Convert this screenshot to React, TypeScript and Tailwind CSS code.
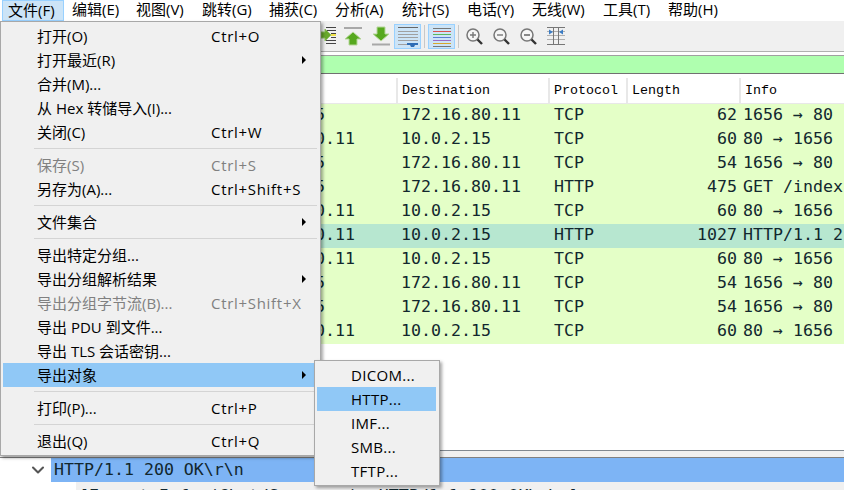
import React from 'react';
import { ChevronDown } from 'lucide-react';

const menuBar = [
  { label: '文件(F)', cls: 'w-[62px] pl-[5px] bg-[#cce4f7] border border-[#99d1ff]' },
  { label: '编辑(E)', cls: 'w-[64px] pl-[8px]' },
  { label: '视图(V)', cls: 'w-[66px] pl-[8px]' },
  { label: '跳转(G)', cls: 'w-[67px] pl-[8px]' },
  { label: '捕获(C)', cls: 'w-[66px] pl-[8px]' },
  { label: '分析(A)', cls: 'w-[67px] pl-[8px]' },
  { label: '统计(S)', cls: 'w-[65px] pl-[8px]' },
  { label: '电话(Y)', cls: 'w-[65px] pl-[8px]' },
  { label: '无线(W)', cls: 'w-[71px] pl-[8px]' },
  { label: '工具(T)', cls: 'w-[65px] pl-[8px]' },
  { label: '帮助(H)', cls: 'w-[70px] pl-[8px]' },
];

// the source column is almost entirely behind the open menu, only its tail shows
const rows = [
  ['5', '172.16.80.11', 'TCP', '62', '1656 → 80'],
  ['0.11', '10.0.2.15', 'TCP', '60', '80 → 1656'],
  ['5', '172.16.80.11', 'TCP', '54', '1656 → 80'],
  ['5', '172.16.80.11', 'HTTP', '475', 'GET /index'],
  ['0.11', '10.0.2.15', 'TCP', '60', '80 → 1656'],
  ['0.11', '10.0.2.15', 'HTTP', '1027', 'HTTP/1.1 2'],
  ['0.11', '10.0.2.15', 'TCP', '60', '80 → 1656'],
  ['5', '172.16.80.11', 'TCP', '54', '1656 → 80'],
  ['5', '172.16.80.11', 'TCP', '54', '1656 → 80'],
  ['0.11', '10.0.2.15', 'TCP', '60', '80 → 1656'],
];

type Item = { label?: string; keys?: string; off?: boolean; sub?: boolean; on?: boolean };

const fileMenu: Item[] = [
  { label: '打开(O)', keys: 'Ctrl+O' },
  { label: '打开最近(R)', sub: true },
  { label: '合并(M)...' },
  { label: '从 Hex 转储导入(I)...' },
  { label: '关闭(C)', keys: 'Ctrl+W' },
  {},
  { label: '保存(S)', keys: 'Ctrl+S', off: true },
  { label: '另存为(A)...', keys: 'Ctrl+Shift+S' },
  {},
  { label: '文件集合', sub: true },
  {},
  { label: '导出特定分组...' },
  { label: '导出分组解析结果', sub: true },
  { label: '导出分组字节流(B)...', keys: 'Ctrl+Shift+X', off: true },
  { label: '导出 PDU 到文件...' },
  { label: '导出 TLS 会话密钥...' },
  { label: '导出对象', sub: true, on: true },
  {},
  { label: '打印(P)...', keys: 'Ctrl+P' },
  {},
  { label: '退出(Q)', keys: 'Ctrl+Q' },
];

const ui = "font-['Open_Sans','Noto_Sans_CJK_SC',sans-serif]";
const mono = "font-['DejaVu_Sans_Mono',monospace]";

function Toolbar() {
  return (
    <div className="h-[30px] bg-[#f0f0f0] flex items-center pl-[316px] shrink-0">
      {/* go to packet */}
      <svg width="24" height="24" viewBox="0 0 24 24">
        <path d="M10 3.5h10M10 6.5h10M15 9.5h5M15 13.5h5M10 16.5h10M10 19.5h10" stroke="#444" fill="none" />
        <path d="M5 8h4V5l6 6-6 6v-3H5z" fill="#68a82c" stroke="#8fc062" />
        <path d="M15 10h5v2h-5z" fill="#f2e34c" />
      </svg>
      {/* first packet */}
      <svg width="24" height="24" viewBox="0 0 24 24" className="ml-[1px]">
        <path d="M3 4h18" stroke="#a8a8a8" strokeWidth="2" />
        <path d="M12 8l8 7h-4v6H8v-6H4z" fill="#56a81e" stroke="#b6d79a" />
      </svg>
      {/* last packet */}
      <svg width="24" height="24" viewBox="0 0 24 24" className="ml-[3px]">
        <path d="M4 20.5h18" stroke="#a8a8a8" strokeWidth="2" />
        <path d="M13 17l8-7h-4V3H9v7H5z" fill="#56a81e" stroke="#b6d79a" />
      </svg>
      {/* auto scroll */}
      <div className="w-[27px] h-[25px] ml-[2px] bg-[#cce4f7] border border-[#99d1ff] flex items-center justify-center">
        <svg width="23" height="23" viewBox="0 0 23 23">
          <path d="M2 2.5h20" stroke="#666" />
          <path d="M2 6.5h20M2 9.5h20M2 12.5h20M2 15.5h20" stroke="#a0a0a0" />
          <path d="M2 19.5h10" stroke="#a0a0a0" />
          <path d="M11 18h11v2h-3l-1 2h-3l-1-2h-3z" fill="#2f6db5" />
        </svg>
      </div>
      <div className="w-px h-[23px] bg-[#c8c8c8] ml-[3px]" />
      {/* colorize */}
      <div className="w-[27px] h-[25px] ml-[3px] bg-[#cce4f7] border border-[#99d1ff] flex items-center justify-center">
        <svg width="20" height="21" viewBox="0 0 20 21" fill="none" strokeWidth="1">
          <path d="M1 2.5h18" stroke="#777" />
          <path d="M1 5.5h18" stroke="#d9534f" />
          <path d="M1 8.5h18" stroke="#5cb85c" />
          <path d="M1 11.5h18" stroke="#5b7fd1" />
          <path d="M1 14.5h18" stroke="#9a6fc4" />
          <path d="M1 17.5h18" stroke="#d8a72c" />
          <path d="M1 20.5h18" stroke="#777" />
        </svg>
      </div>
      <div className="w-px h-[23px] bg-[#c8c8c8] ml-[3px]" />
      {/* zoom in, zoom out, normal size */}
      <svg width="20" height="20" viewBox="0 0 20 20" fill="none" className="ml-[4px]">
        <circle cx="10" cy="9" r="6" fill="#f6f6f6" stroke="#777" strokeWidth="1.5" />
        <path d="M7 9h6M10 6v6" stroke="#777" strokeWidth="1.4" />
        <path d="M14.5 13.5l4.5 4.5" stroke="#333" strokeWidth="2.4" />
      </svg>
      <svg width="20" height="20" viewBox="0 0 20 20" fill="none" className="ml-[7px]">
        <circle cx="10" cy="9" r="6" fill="#f6f6f6" stroke="#777" strokeWidth="1.5" />
        <path d="M7 9h6" stroke="#777" strokeWidth="1.4" />
        <path d="M14.5 13.5l4.5 4.5" stroke="#333" strokeWidth="2.4" />
      </svg>
      <svg width="20" height="20" viewBox="0 0 20 20" fill="none" className="ml-[7px]">
        <circle cx="10" cy="9" r="6" fill="#f6f6f6" stroke="#777" strokeWidth="1.5" />
        <path d="M7 8h6v2H7z" fill="#888" />
        <path d="M14.5 13.5l4.5 4.5" stroke="#333" strokeWidth="2.4" />
      </svg>
      {/* resize columns */}
      <svg width="20" height="20" viewBox="0 0 20 20" className="ml-[9px]">
        <path d="M1 1.5h18M1 18.5h18" stroke="#777" />
        <path d="M1 5.5h18M1 9.5h18M1 13.5h18" stroke="#b0b0b0" />
        <path d="M7.5 1v18M12.5 1v18" stroke="#777" />
        <path d="M7 6L3 3.5v5zM13 6l4-2.5v5z" fill="#3b7cc4" />
      </svg>
    </div>
  );
}

export default function App() {
  return (
    <div className={`${ui} relative w-[844px] h-[490px] overflow-hidden bg-white text-[15px] text-black`}>
      {/* menu bar */}
      <div className="h-[21px] flex pl-[2px] bg-white">
        {menuBar.map((m) => (
          <div key={m.label} className={`h-[21px] leading-[18px] whitespace-nowrap ${m.cls}`}>{m.label}</div>
        ))}
      </div>

      <Toolbar />
      <div className="h-[1px] bg-[#b0b0b0]" />

      {/* display filter */}
      <div className="h-[26px] bg-white pt-[3px]">
        <div className="w-full h-[19px] bg-[#afffaf] border-t border-t-[#a0a0a0] border-b border-b-[#707070]" />
      </div>

      {/* packet list */}
      <div className="h-[26px] flex items-center font-['Liberation_Mono',monospace] text-[13.33px] border-b border-[#e8e8e8]">
        <div className="w-[398px] h-full border-r-2 border-[#e8e8e8]" />
        <div className="w-[152px] h-full pl-[4px] leading-[25px] border-r-2 border-[#e8e8e8]">Destination</div>
        <div className="w-[78px] h-full pl-[4px] leading-[25px] border-r-2 border-[#e8e8e8]">Protocol</div>
        <div className="w-[113px] h-full pl-[4px] leading-[25px] border-r-2 border-[#e8e8e8]">Length</div>
        <div className="flex-1 pl-[4px] leading-[25px]">Info</div>
      </div>
      <div className={`${mono} text-[16.6px] text-[#12272e]`}>
        {rows.map((r, i) => (
          <div key={i} className={`h-[24px] flex leading-[22px] whitespace-pre ${i === 5 ? 'bg-[#b7e7d0]' : 'bg-[#e4ffc7]'}`}>
            <div className="w-[398px] pl-[315px]">{r[0]}</div>
            <div className="w-[152px] pl-[3px]">{r[1]}</div>
            <div className="w-[78px] pl-[4px]">{r[2]}</div>
            <div className="w-[109px] text-right">{r[3]}</div>
            <div className="flex-1 pl-[6px] overflow-hidden">{r[4]}</div>
          </div>
        ))}
      </div>

      {/* packet details */}
      <div className="h-[106px] bg-white" />
      <div className="h-[1px] bg-[#808890]" />
      <div className="h-[6px] bg-[#f0f0f0]" />
      <div className="h-[1px] bg-[#808080]" />
      <div className={`flex h-[24px] ${mono} text-[16.6px] text-[#12272e] bg-white`}>
        <ChevronDown size={20} strokeWidth={2.5} className="ml-[28px] mt-[2px] text-[#555]" />
        <div className="flex-1 ml-[3px] bg-[#7db4f5] pl-[3px] leading-[24px]">HTTP/1.1 200 OK\r\n</div>
      </div>
      <div className="pl-[76px] bg-white">
        <div className={`pl-[3px] pt-[3px] ${mono} text-[16.6px] leading-[22px] whitespace-pre text-[#12272e] bg-[#f0f0f0]`}>[Expert Info (Chat/Sequence): HTTP/1.1 200 OK\r\n]</div>
      </div>

      {/* file menu */}
      <div className="absolute left-0 top-[21px] w-[321px] h-[435px] bg-[#f0f0f0] border border-[#a8a8a8] py-[2px] pl-[2px] pr-[1px] shadow-[2px_2px_3px_rgba(0,0,0,0.35)]">
        {fileMenu.map((it, i) =>
          it.label ? (
            <div key={i} className={`h-[24px] flex items-center pl-[34px] relative whitespace-nowrap ${it.on ? 'bg-[#90c8f6]' : ''} ${it.off ? 'text-[#808080]' : ''}`}>
              <span className="w-[174px]">{it.label}</span>
              {it.keys && <span className="tracking-[0.7px]">{it.keys}</span>}
              {it.sub && <span className="absolute left-[299px] top-[8px] w-0 h-0 border-y-[4px] border-y-transparent border-l-[4px] border-l-black" />}
            </div>
          ) : (
            <div key={i} className="h-[9px] flex items-center pl-[31px] pr-[2px]">
              <div className="w-full h-px bg-[#d4d4d4]" />
            </div>
          ),
        )}
      </div>

      {/* export objects submenu */}
      <div className="absolute left-[314px] top-[360px] w-[126px] h-[126px] bg-[#f0f0f0] border border-[#a8a8a8] py-[2px] pl-[2px] pr-[3px] shadow-[2px_2px_3px_rgba(0,0,0,0.35)]">
        {['DICOM...', 'HTTP...', 'IMF...', 'SMB...', 'TFTP...'].map((t) => (
          <div key={t} className={`h-[24px] flex items-center pl-[34px] tracking-[0.3px] ${t === 'HTTP...' ? 'bg-[#90c8f6]' : ''}`}>{t}</div>
        ))}
      </div>
    </div>
  );
}
